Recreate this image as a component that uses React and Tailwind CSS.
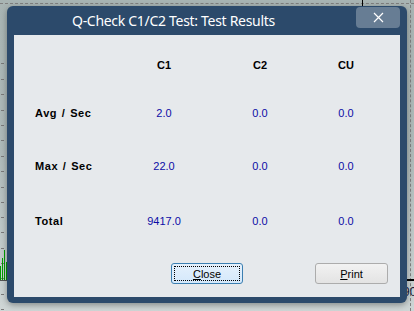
import React from 'react';

const rows = [
    { label: 'Avg / Sec', c1: '2.0', c2: '0.0', cu: '0.0', mt: 'mt-[32px]' },
    { label: 'Max / Sec', c1: '22.0', c2: '0.0', cu: '0.0', mt: 'mt-[37px]' },
    { label: 'Total', c1: '9417.0', c2: '0.0', cu: '0.0', mt: 'mt-[39px]' },
];

const ticks = [3, 19, 34, 50, 65, 80, 96, 111, 127, 142, 157, 172, 188, 203, 218, 234, 249, 264];
const bars = [14, 22, 30, 18, 26, 34, 12, 20, 28];

const App = () => {
    return (
        <div className="relative w-[414px] h-[311px] overflow-hidden bg-gradient-to-b from-[#a8b4b3] via-[#aebab9] to-[#cfd6d6] font-['Liberation_Sans',sans-serif]">
            {/* graph behind the dialog */}
            <div className="absolute left-0 right-0 top-[3px] border-t border-dashed border-[#808080]" />
            <div className="absolute top-0 bottom-0 left-[410px] border-l border-dashed border-[#808080]" />
            <div className="absolute top-0 left-[362px] w-px h-[7px] bg-black" />
            {ticks.map((t) => (
                <div key={t} className="absolute left-[1px] w-[3px] h-px bg-[#7a7a7a]" style={{ top: t + 60 }} />
            ))}
            <div className="absolute left-0 top-[245px] flex items-end gap-px h-[35px]">
                {bars.map((h, i) => (
                    <div key={i} className="w-[1px] bg-[#00a000]" style={{ height: h }} />
                ))}
            </div>
            <div className="absolute left-0 w-[7px] top-[280px] h-px bg-[#555]" />
            <div className="absolute left-[400px] right-0 top-[279px] h-[2px] bg-black" />
            <div className="absolute left-[403px] top-[283px] w-[11px] overflow-hidden whitespace-nowrap text-[12px] text-[#1a1a3a]">90</div>

            <div className="relative pt-[6px] pl-[7px]">
                <div className="w-[400px] h-[297px] bg-[#2c4a6b] rounded-[6px] shadow-[0_2px_6px_rgba(0,0,0,0.35)] flex flex-col px-[7px] pb-[6px]">
                    <div className="h-[29px] flex items-start">
                        <div className="flex-1 pl-[58px] pt-[5px] text-white text-[14px] leading-[20px] tracking-[-0.3px] font-['Noto_Sans',sans-serif]">
                            Q-Check C1/C2 Test: Test Results
                        </div>
                        <div className="mt-[1px] w-[44px] h-[21px] bg-[#677d94] rounded-[4px] flex items-center justify-center">
                            <svg width="11" height="11" viewBox="0 0 11 11">
                                <path d="M1 1L10 10M10 1L1 10" stroke="white" strokeWidth="1.2" />
                            </svg>
                        </div>
                    </div>
                    <div className="flex-1 bg-[#e6e9ec] flex flex-col text-[11px] leading-[16px]">
                        <div className="grid grid-cols-[110px_80px_112px_60px] mt-[22px] font-bold text-black">
                            <div />
                            <div className="text-center">C1</div>
                            <div className="text-center">C2</div>
                            <div className="text-center">CU</div>
                        </div>
                        {rows.map((r) => (
                            <div key={r.label} className={`grid grid-cols-[110px_80px_112px_60px] ${r.mt}`}>
                                <div className="pl-[21px] font-bold text-black tracking-[0.6px] [word-spacing:1px]">{r.label}</div>
                                <div className="text-center text-[#0c0ca6]">{r.c1}</div>
                                <div className="text-center text-[#0c0ca6]">{r.c2}</div>
                                <div className="text-center text-[#0c0ca6]">{r.cu}</div>
                            </div>
                        ))}
                        <div className="mt-auto mb-[13px] flex items-center pl-[157px] gap-[72px]">
                            <button className="w-[72px] h-[21px] rounded-[3px] border border-[#3c7fb1] bg-gradient-to-b from-[#e5f1fc] to-[#d4e8fb] p-[2px]">
                                <span className="flex items-center justify-center w-full h-full border border-dotted border-black text-[11px] text-black">
                                    <span className="underline">C</span>lose
                                </span>
                            </button>
                            <button className="w-[73px] h-[21px] rounded-[3px] border border-[#acacac] bg-gradient-to-b from-[#f2f2f2] to-[#e3e3e3] text-[11px] text-black">
                                <span className="underline">P</span>rint
                            </button>
                        </div>
                    </div>
                </div>
            </div>
        </div>
    );
};

export default App;
